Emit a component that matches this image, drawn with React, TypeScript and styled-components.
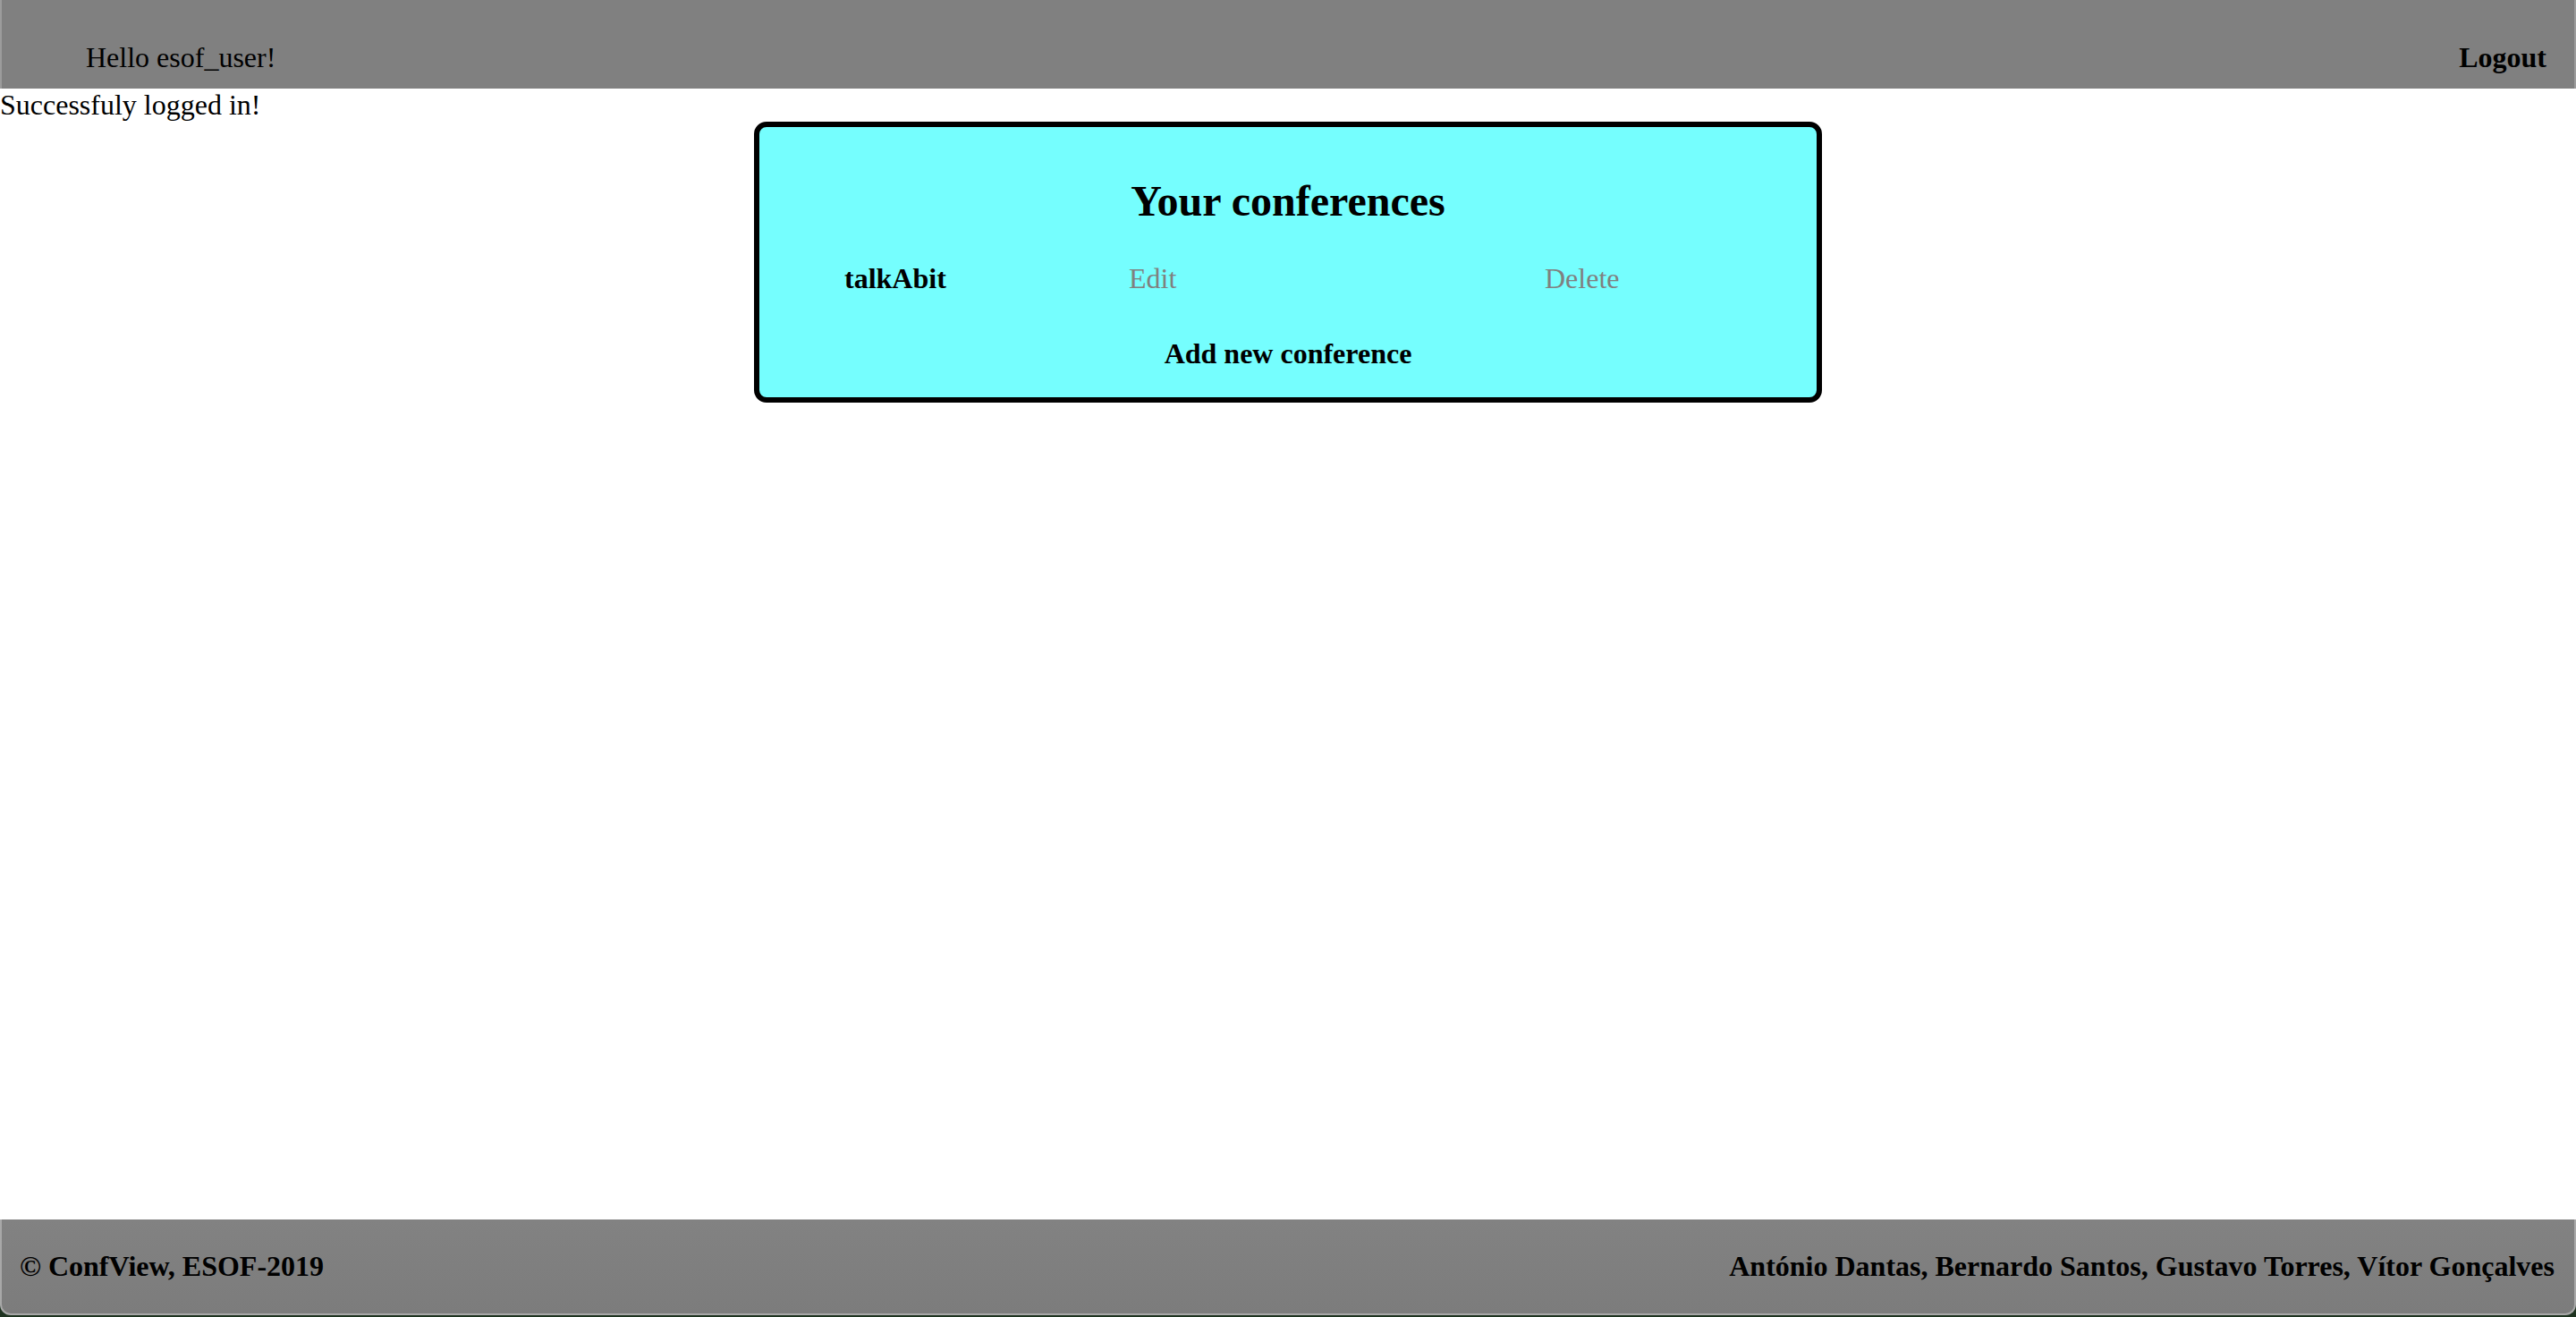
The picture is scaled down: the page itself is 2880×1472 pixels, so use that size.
import { FC } from "react";
import styled, { createGlobalStyle } from "styled-components";

interface IConference {
  name: string;
  id: number;
}

const conferences: IConference[] = [{ name: "talkAbit", id: 1 }];

const GlobalStyle = createGlobalStyle`
  html, body {
    margin: 0;
    padding: 0;
    background: #ffffff;
  }
  body {
    font-family: "Liberation Serif", "Times New Roman", serif;
    font-size: 32px;
    color: #000000;
  }
`;

const App: FC = (): JSX.Element => {
  return (
    <Shell>
      <GlobalStyle />
      <Header>
        <Greeting>Hello esof_user!</Greeting>
        <Logout href="#">Logout</Logout>
      </Header>
      <Main>
        <Flash>Successfuly logged in!</Flash>
        <Card>
          <Title>Your conferences</Title>
          {conferences.map((conf) => (
            <ConfRow key={conf.id}>
              <ConfName>{conf.name}</ConfName>
              <ActionLink href="#">Edit</ActionLink>
              <ActionLink href="#">Delete</ActionLink>
            </ConfRow>
          ))}
          <AddLink href="#">Add new conference</AddLink>
        </Card>
      </Main>
      <FooterDock>
        <Footer>
          <FooterText>© ConfView, ESOF-2019</FooterText>
          <FooterText>
            António Dantas, Bernardo Santos, Gustavo Torres, Vítor Gonçalves
          </FooterText>
        </Footer>
      </FooterDock>
    </Shell>
  );
};

export default App;

const Shell = styled.div`
  display: flex;
  flex-direction: column;
  min-height: 100vh;
`;

const Header = styled.header`
  display: flex;
  justify-content: space-between;
  align-items: flex-end;
  height: 99px;
  box-sizing: border-box;
  padding: 0 31px 16px 94px;
  background: #808080;
  border-left: 2px solid #9c9c9c;
  border-right: 2px solid #9c9c9c;
`;

const Greeting = styled.span`
  font-size: 32px;
`;

const Logout = styled.a`
  font-size: 32px;
  font-weight: bold;
  color: #000000;
  text-decoration: none;
`;

const Main = styled.main`
  flex: 1;
  display: flex;
  flex-direction: column;
`;

const Flash = styled.div`
  font-size: 32px;
  line-height: 37px;
`;

const Card = styled.section`
  align-self: center;
  width: 1194px;
  box-sizing: border-box;
  display: flex;
  flex-direction: column;
  align-items: center;
  padding: 55px 0 30px;
  background: #75fefe;
  border: 6px solid #000000;
  border-radius: 14px;
`;

const Title = styled.h2`
  margin: 0;
  font-size: 48px;
  line-height: 55px;
  font-weight: bold;
`;

const ConfRow = styled.div`
  align-self: stretch;
  display: grid;
  grid-template-columns: 318px 465px auto;
  padding-left: 95px;
  margin-top: 41px;
  line-height: 37px;
`;

const ConfName = styled.span`
  font-weight: bold;
`;

const ActionLink = styled.a`
  color: #808080;
  text-decoration: none;
`;

const AddLink = styled.a`
  margin-top: 47px;
  line-height: 37px;
  font-weight: bold;
  color: #000000;
  text-decoration: none;
`;

const FooterDock = styled.div`
  background: #1e3320;
  padding-bottom: 2px;
`;

const Footer = styled.footer`
  display: flex;
  justify-content: space-between;
  align-items: center;
  height: 107px;
  box-sizing: border-box;
  padding: 0 22px 0 20px;
  background: linear-gradient(#828282, #7c7c7c);
  border: 2px solid #a8a8a8;
  border-top: none;
  border-radius: 0 0 12px 12px;
`;

const FooterText = styled.span`
  font-size: 32px;
  font-weight: bold;
`;
